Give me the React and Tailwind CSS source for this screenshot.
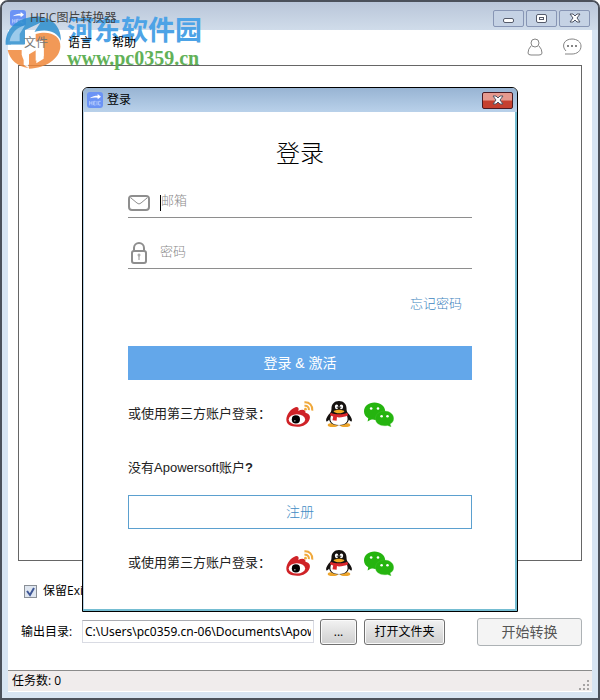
import React, { useState } from "react";

function AppIcon() {
  return (
    <svg className="size-4 shrink-0" viewBox="0 0 48 48" aria-hidden="true">
      <rect width="48" height="48" rx="9" fill="#6b93f5" />
      <path d="M8 19c8-7 16-8 24-8V6l10 8-10 8v-5c-8-1-16-1-24 2z" fill="#fff" />
      <path
        d="M8 27v13M8 33h7M15 27v13M26 28h-6v11h6M20 33h5M30 27v13M41 28h-6v11h6"
        fill="none"
        stroke="#d5e2ff"
        strokeWidth="2"
      />
    </svg>
  );
}

function WeiboIcon() {
  return (
    <svg className="h-[26px] w-7" viewBox="0 0 80 76" aria-hidden="true">
      <path
        d="M0 54C0 40 14 21 27 18c8-1 11 4 8 11 9-6 23-5 21 5 12 3 15 11 12 19-5 14-18 22-36 22C12 75 0 68 0 54z"
        fill="#cf2227"
      />
      <ellipse cx="31" cy="54" rx="24" ry="15" fill="#fff" />
      <circle cx="28" cy="54" r="12" fill="#000" />
      <circle cx="25" cy="58" r="2" fill="#fff" />
      <g fill="none" stroke="#f0a93c" strokeWidth="6">
        <path d="M53 4c15-1 24 9 23 24" />
        <path d="M53 14c9-1 14 5 13 13" />
      </g>
      <circle cx="56" cy="24" r="4" fill="#f0a93c" />
    </svg>
  );
}

function QqIcon() {
  return (
    <svg className="h-[26px] w-[26px]" viewBox="0 0 76 76" aria-hidden="true">
      <ellipse cx="20" cy="70" rx="15" ry="6" fill="#eda52c" />
      <ellipse cx="56" cy="70" rx="15" ry="6" fill="#eda52c" />
      <path
        d="M38 0C24 0 16 10 16 22c0 6-1 9-4 13C4 43-2 54 1 59c2 3 6-2 8-5 3 12 13 17 29 17s26-5 29-17c2 3 6 8 8 5 3-5-3-16-11-24-3-4-4-7-4-13C60 10 52 0 38 0z"
        fill="#15110f"
      />
      <path d="M16 40c14 6 30 6 44 0 8 16 1 30-22 30S8 56 16 40z" fill="#fff" />
      <path d="M14 34c14 6 34 6 48 0l3 8c-8 4-17 6-27 6l-6-1-1 11-12-2 2-11-10-3z" fill="#d9272b" />
      <ellipse cx="31" cy="17" rx="5" ry="7" fill="#fff" />
      <ellipse cx="45" cy="17" rx="5" ry="7" fill="#fff" />
      <circle cx="33" cy="18" r="2" fill="#111" />
      <circle cx="43" cy="18" r="2" fill="#111" />
      <path d="M22 30c8-6 24-6 32 0-6 8-26 8-32 0z" fill="#f3ac24" />
    </svg>
  );
}

function WechatIcon() {
  return (
    <svg className="h-[25px] w-[30px]" viewBox="0 0 92 75" aria-hidden="true">
      <path d="M32 1C14 1 0 12 0 28c0 9 5 16 13 21l-2 10 11-6c4 1 7 1 12 1 17 0 31-11 31-26S50 1 32 1z" fill="#25b40f" />
      <path
        d="M63 27c-16 0-28 10-28 23s12 22 28 22c3 0 6 0 9-1l11 4-3-8c7-4 11-10 11-17 0-13-12-23-28-23z"
        fill="#25b40f"
        stroke="#4fca3c"
      />
      <g fill="#fff">
        <circle cx="22" cy="19" r="4" />
        <circle cx="43" cy="19" r="4" />
        <circle cx="54" cy="43" r="4" />
        <circle cx="72" cy="43" r="4" />
      </g>
    </svg>
  );
}

function SocialLogin() {
  return (
    <div className="flex h-8 items-center">
      <span className="w-[158px] whitespace-nowrap text-[13px] leading-5">或使用第三方账户登录：</span>
      <button type="button" aria-label="微博" className="mr-3">
        <WeiboIcon />
      </button>
      <button type="button" aria-label="QQ" className="mr-3">
        <QqIcon />
      </button>
      <button type="button" aria-label="微信">
        <WechatIcon />
      </button>
    </div>
  );
}

function CloseGlyph() {
  return (
    <svg className="h-3 w-3" viewBox="0 0 12 12" aria-hidden="true">
      <path
        d="M1 2h3l2 2 2-2h3L8 6l3 4H8L6 8l-2 2H1l3-4z"
        fill="#fff"
        stroke="#4f5565"
        strokeLinejoin="round"
      />
    </svg>
  );
}

const windowButton =
  "flex h-[17px] w-[31px] items-center justify-center rounded-xs border border-[#8795b4] bg-[#c5d2e4]";

function LoginDialog() {
  const [email, setEmail] = useState("");
  const [password, setPassword] = useState("");

  return (
    <section
      role="dialog"
      aria-label="登录"
      className="absolute left-1/2 top-[85px] w-[436px] -translate-x-1/2 overflow-hidden rounded-t-md border border-black bg-white shadow-[inset_-2px_-2px_0_#74bdd2,inset_1px_0_0_#b9d3e6]"
    >
      <header className="flex h-6 items-center bg-linear-to-b from-[#98b4d3] to-[#b9d1ea] pl-1 pr-1">
        <AppIcon />
        <span className="ml-1 flex-1 text-xs text-black">登录</span>
        <button
          type="button"
          aria-label="关闭"
          className="flex h-[17px] w-[31px] items-center justify-center rounded-xs border border-[#4a1a22] bg-linear-to-b from-[#e69a8f] from-45% to-[#c5402f] to-55%"
        >
          <CloseGlyph />
        </button>
      </header>

      <form
        onSubmit={(e) => e.preventDefault()}
        className="px-[45px] pb-8 pt-6 font-['Liberation_Sans','Noto_Sans_CJK_SC',sans-serif] text-[#222]"
      >
        <h1 className="text-center text-2xl font-light leading-9 text-black">登录</h1>

        <div className="flex h-[46px] items-center border-b border-[#8e8e8e] pt-3">
          <svg className="mt-1 h-[18px] w-[22px]" viewBox="0 0 22 18" fill="none" stroke="#8e8e8e" aria-hidden="true">
            <rect x="1" y="2" width="20" height="14" rx="3" strokeWidth="2" />
            <path d="M3 4l6 5q2 2 4 0l6-5" strokeWidth="1" />
          </svg>
          {/* text cursor */}
          <span className="ml-2.5 mt-1 h-4 w-px bg-black" />
          <input
            type="email"
            aria-label="邮箱"
            placeholder="邮箱"
            value={email}
            onChange={(e) => setEmail(e.target.value)}
            className="h-6 min-w-0 flex-1 text-[13px] outline-none placeholder:font-light placeholder:text-[#8a8a8a]"
          />
        </div>

        <div className="flex h-[51px] items-center border-b border-[#8e8e8e] pt-4">
          <svg className="mt-1 h-[22px] w-[22px]" viewBox="0 0 22 22" fill="none" stroke="#8e8e8e" aria-hidden="true">
            <rect x="4" y="9" width="14" height="12" rx="2" strokeWidth="2" />
            <path d="M6 9V6a5 5 0 0 1 10 0v3" strokeWidth="2" />
            <circle cx="11" cy="13" r="1" />
            <path d="M11 14v4" />
          </svg>
          <input
            type="password"
            aria-label="密码"
            placeholder="密码"
            value={password}
            onChange={(e) => setPassword(e.target.value)}
            className="ml-2.5 h-6 min-w-0 flex-1 text-[13px] outline-none placeholder:font-light placeholder:text-[#8a8a8a]"
          />
        </div>

        <div className="mt-[25px] flex justify-end pr-2.5">
          <a href="#forgot" className="text-[13px] font-light leading-5 text-[#3f86c0]">
            忘记密码
          </a>
        </div>

        <button type="submit" className="mt-8 h-[34px] w-full bg-[#63a7ea] text-sm text-white">
          登录 &amp; 激活
        </button>

        <div className="mt-[18px]">
          <SocialLogin />
        </div>

        <p className="mt-7 text-[13px] leading-5">
          没有Apowersoft账户<b>?</b>
        </p>

        <button type="button" className="mb-[18px] mt-[17px] h-[34px] w-full border border-[#5ba0cf] text-sm font-light text-[#3f8cc4]">
          注册
        </button>

        <SocialLogin />
      </form>
    </section>
  );
}

function Watermark() {
  return (
    <div className="pointer-events-none absolute left-[3px] top-3 flex items-start" aria-hidden="true">
      <svg className="h-[56px] w-[60px] opacity-85" viewBox="0 0 180 168">
        <path d="M2 92C0 50 30 14 84 8c50-4 84 24 84 72-12-26-38-36-72-28l-8 2 18-28-46 22v44z" fill="#2e8fce" />
        <path d="M14 82C18 58 36 40 60 34L44 60v22z" fill="#8cc3e8" />
        <path d="M8 108h42v14c4 14 10 22 20 28v12C38 158 14 138 8 108z" fill="#f0883a" />
        <path d="M92 60c44-12 76 6 74 38-2 36-44 64-94 66v-50c8-4 14-8 20-10v36c10-4 18-8 24-14V86c0-8-12-8-24-4z" fill="#f0883a" />
        <path d="M18 92h40l30-42v50c10-10 28-14 28-2v36l-22 14v-40l-24 14v40l-14-10v-50H18z" fill="#fff" />
      </svg>
      <div className="ml-0.5 font-bold">
        <div className="whitespace-nowrap text-[27px] leading-8 text-[#4da3e6]">河东软件园</div>
        <div className="font-['Liberation_Serif',serif] text-xl leading-6 text-[#62b158]">www.pc0359.cn</div>
      </div>
    </div>
  );
}

export default function App() {
  const [keepExif, setKeepExif] = useState(true);
  const [output, setOutput] = useState("C:\\Users\\pc0359.cn-06\\Documents\\Apowersoft");

  return (
    <div className="relative flex min-h-screen flex-col rounded-t-lg border-2 border-[#4b515b] bg-[#d7e4f2] px-1.5 pb-1.5 font-['Open_Sans','Noto_Sans_CJK_SC',sans-serif] text-xs text-black">
      <header className="-mx-1.5 flex h-7 items-center rounded-t-md bg-linear-to-b from-[#b9c6d9] to-[#d0dcea] px-2 pt-1">
        <AppIcon />
        <span className="relative z-10 ml-1 flex-1 text-[#444]">HEIC图片转换器</span>
        <div className="flex gap-0.5">
          <button type="button" aria-label="最小化" className={windowButton}>
            <span className="mt-1 h-[5px] w-[11px] rounded-xs border border-[#555b6b] bg-white" />
          </button>
          <button type="button" aria-label="最大化" className={windowButton}>
            <span className="flex h-[9px] w-[11px] items-center justify-center rounded-xs border border-[#555b6b] bg-white">
              <span className="h-[3px] w-[5px] border border-[#555b6b]" />
            </span>
          </button>
          <button type="button" aria-label="关闭窗口" className={windowButton}>
            <CloseGlyph />
          </button>
        </div>
      </header>

      <main className="flex flex-1 flex-col bg-white">
        <nav className="flex h-[35px] items-center pl-4 pr-2.5">
          <div className="relative z-10 flex flex-1 gap-5 pb-2.5">
            <button type="button" className="text-[#777]">文件</button>
            <button type="button">语言</button>
            <button type="button">帮助</button>
          </div>
          <button type="button" aria-label="账户" className="mb-0.5 mr-[18px]">
            <svg className="h-[18px] w-[18px]" viewBox="0 0 18 18" fill="none" stroke="#858585" aria-hidden="true">
              <circle cx="9" cy="5" r="4" />
              <path d="M5 8Q2 11 2 15q0 2 3 2h8q3 0 3-2 0-4-3-7" />
            </svg>
          </button>
          <button type="button" aria-label="反馈" className="mb-0.5">
            <svg className="h-[18px] w-[20px]" viewBox="0 0 20 18" fill="none" stroke="#858585" aria-hidden="true">
              <path d="M4 13C-1 8 2 1 10 1c5 0 9 3 9 7 0 5-4 8-9 8H3" />
              <path d="M5 8h2M9 8h2M13 8h2" strokeWidth="2" />
            </svg>
          </button>
        </nav>

        <div className="mx-2.5 flex-1 border border-[#666]" />

        <label className="ml-4 mt-5 flex h-5 items-center gap-1.5">
          <span className="relative flex size-[13px]">
            <input
              type="checkbox"
              checked={keepExif}
              onChange={(e) => setKeepExif(e.target.checked)}
              className="size-[13px] appearance-none border border-[#8a8f96] bg-[#dfe6f0]"
            />
            {keepExif && (
              <svg className="pointer-events-none absolute inset-0 size-[13px]" viewBox="0 0 13 13" aria-hidden="true">
                <path d="M3 6l3 4 4-7" fill="none" stroke="#3f5796" strokeWidth="2" />
              </svg>
            )}
          </span>
          保留Exif信息
        </label>

        <div className="mb-6 mt-4 flex h-[29px] items-center pl-[13px] pr-2.5">
          <label htmlFor="output" className="w-[61px] whitespace-nowrap">输出目录:</label>
          <input
            id="output"
            value={output}
            onChange={(e) => setOutput(e.target.value)}
            className="h-[23px] min-w-0 flex-1 border border-[#d9dbe3] border-t-[#abadb3] px-0.5 font-['Noto_Sans',sans-serif] text-xs"
          />
          <button type="button" className="ml-1.5 h-[26px] w-[37px] rounded-[3px] border border-[#707070] bg-linear-to-b from-[#f2f2f2] to-[#cfcfcf] shadow-[inset_0_0_0_1px_#fafafa]">
            ...
          </button>
          <button type="button" className="ml-[7px] h-[26px] w-[81px] whitespace-nowrap rounded-[3px] border border-[#707070] bg-linear-to-b from-[#f2f2f2] to-[#cfcfcf] shadow-[inset_0_0_0_1px_#fafafa]">
            打开文件夹
          </button>
          <button type="button" className="ml-8 h-7 w-[105px] rounded-[3px] border border-[#adb2b5] bg-[#f4f4f4] text-sm text-[#555]">
            开始转换
          </button>
        </div>

        <footer className="flex h-[22px] items-center justify-between border-b border-t border-b-white border-t-[#8b8b8b] bg-[#f0ecec] pl-1 pr-0.5">
          <span>任务数: 0</span>
          <svg className="size-3 self-end" viewBox="0 0 12 12" fill="#a5a2a2" aria-hidden="true">
            <path d="M9 1h2v2H9zM5 5h2v2H5zM9 5h2v2H9zM1 9h2v2H1zM5 9h2v2H5zM9 9h2v2H9z" />
          </svg>
        </footer>
      </main>

      <LoginDialog />
      <Watermark />
    </div>
  );
}
